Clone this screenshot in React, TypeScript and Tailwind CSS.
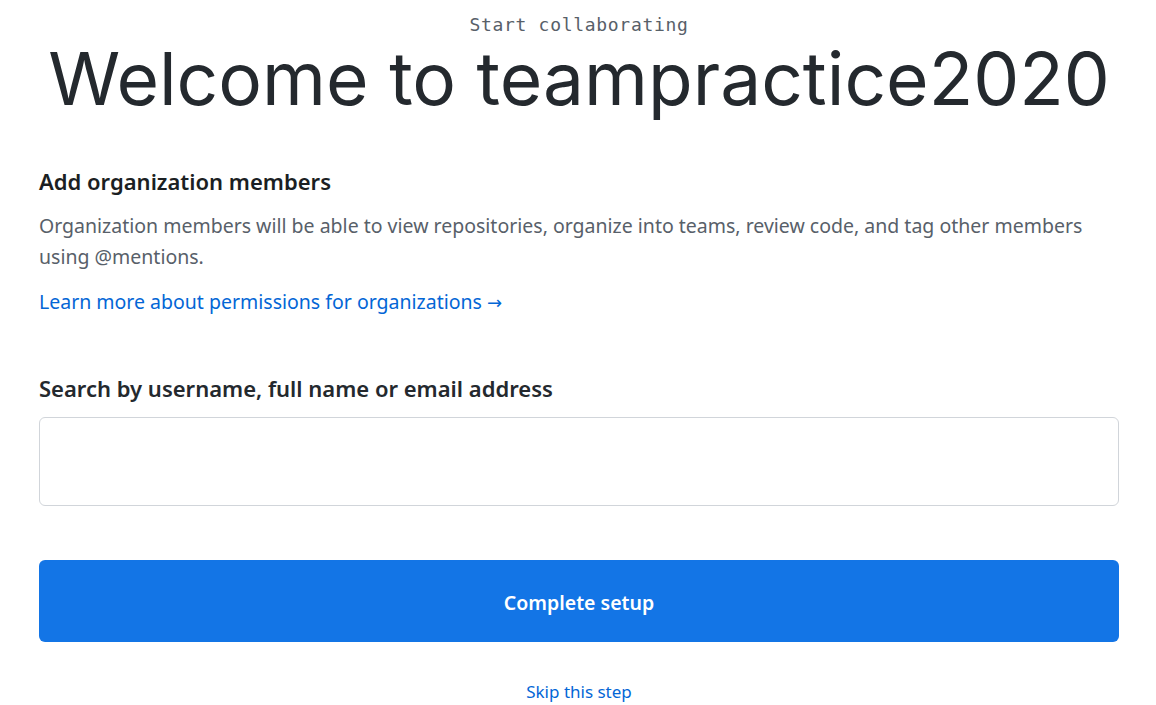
export default function App() {
  return (
    <div className="min-h-screen bg-white">
      <div className="ml-[39px] mr-[37px] flex flex-col font-['Noto_Sans',sans-serif] text-[#24292e]">
        <div className="flex flex-col items-center pt-[13px]">
          <p className="font-['DejaVu_Sans_Mono',monospace] text-[18px] leading-[24px] tracking-[0.7px] text-[#586069]">
            Start collaborating
          </p>
          <h1 className="font-['Inter',sans-serif] text-[73px] leading-[84px] text-[#24292e]">
            Welcome to teampractice2020
          </h1>
        </div>

        <div className="mt-[45px] flex flex-col">
          <h2 className="text-[22px] leading-[30px] font-semibold text-[#1b1f23]">Add organization members</h2>
          <p className="mt-[14px] text-[19.5px] leading-[31px] text-[#586069]">
            Organization members will be able to view repositories, organize into teams, review code, and tag other
            members using @mentions.
          </p>
          <a href="#" className="mt-[14px] self-start text-[19.5px] leading-[31px] text-[#0366d6]">
            Learn more about permissions for organizations{' '}
            <span className="font-['DejaVu_Sans',sans-serif] text-[18px]">→</span>
          </a>
        </div>

        <label className="mt-[55px] text-[22px] leading-[30px] font-semibold text-[#24292e]">
          Search by username, full name or email address
        </label>
        <input
          type="text"
          className="mt-[14px] h-[89px] w-full rounded-[6px] border border-[#d1d5da] px-3 outline-none"
        />

        <button className="mt-[54px] h-[82px] w-full rounded-[6px] bg-[#1375e6] pt-[4px] text-[19.5px] font-semibold text-white">
          Complete setup
        </button>

        <a href="#" className="mt-[38px] self-center text-[17px] leading-[24px] text-[#0366d6]">
          Skip this step
        </a>
      </div>
    </div>
  );
}
